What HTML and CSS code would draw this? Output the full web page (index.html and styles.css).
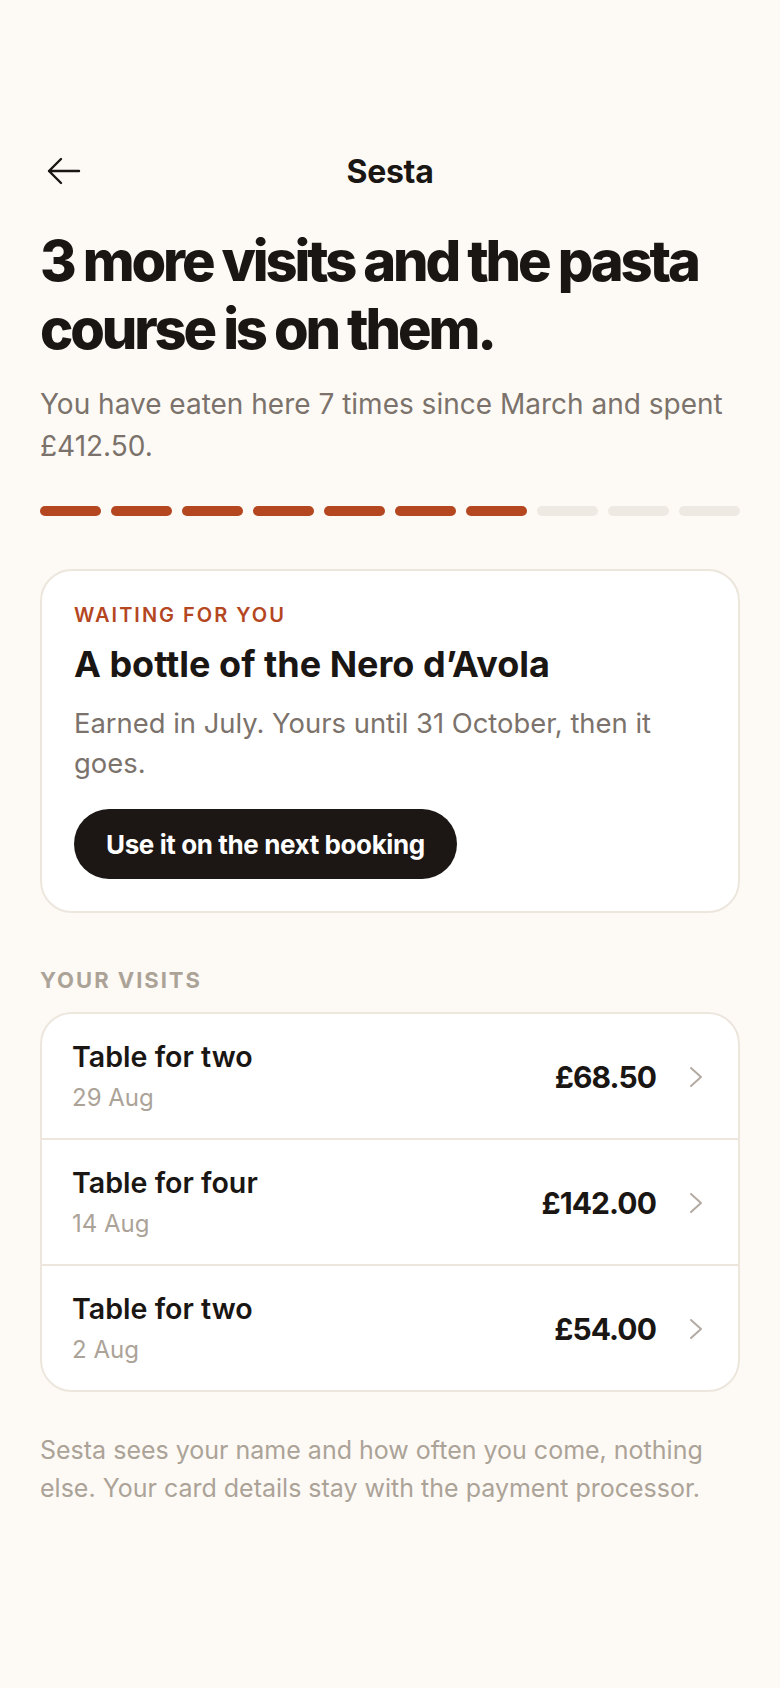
FILE: index.html
```
<!DOCTYPE html>
<html lang="en">
<head>
  <meta charset="UTF-8">
  <meta name="viewport" content="width=device-width, initial-scale=1.0">
  <title>Sesta – Your visits</title>
  <link rel="stylesheet" href="styles.css">
</head>
<body>
  <main class="page">
    <header class="topbar">
      <button class="back" aria-label="Back">
        <svg width="34" height="28" viewBox="0 0 34 28" fill="none" stroke="currentColor" stroke-width="2.4" stroke-linecap="round" stroke-linejoin="round">
          <path d="M32 14H2M14 2L2 14l12 12"/>
        </svg>
      </button>
      <div class="topbar-title">Sesta</div>
      <span></span>
    </header>

    <h1>3 more visits and the pasta course is on them.</h1>
    <p class="intro">You have eaten here 7 times since March and spent £412.50.</p>

    <!-- 7 of 10 visits -->
    <div class="progress">
      <span class="seg done"></span>
      <span class="seg done"></span>
      <span class="seg done"></span>
      <span class="seg done"></span>
      <span class="seg done"></span>
      <span class="seg done"></span>
      <span class="seg done"></span>
      <span class="seg"></span>
      <span class="seg"></span>
      <span class="seg"></span>
    </div>

    <!-- Reward card -->
    <section class="reward">
      <div class="eyebrow">Waiting for you</div>
      <h2>A bottle of the Nero d’Avola</h2>
      <p>Earned in July. Yours until 31 October, then it goes.</p>
      <button class="btn">Use it on the next booking</button>
    </section>

    <div class="section-label">Your visits</div>
    <ul class="visits">
      <li class="visit">
        <div class="visit-info">
          <div class="visit-name">Table for two</div>
          <div class="visit-date">29 Aug</div>
        </div>
        <div class="visit-price">£68.50</div>
        <svg class="chevron" width="20" height="24" viewBox="0 0 20 24" fill="none" stroke="currentColor" stroke-width="2" stroke-linecap="round" stroke-linejoin="round"><path d="M5 3l10 9-10 9"/></svg>
      </li>
      <li class="visit">
        <div class="visit-info">
          <div class="visit-name">Table for four</div>
          <div class="visit-date">14 Aug</div>
        </div>
        <div class="visit-price">£142.00</div>
        <svg class="chevron" width="20" height="24" viewBox="0 0 20 24" fill="none" stroke="currentColor" stroke-width="2" stroke-linecap="round" stroke-linejoin="round"><path d="M5 3l10 9-10 9"/></svg>
      </li>
      <li class="visit">
        <div class="visit-info">
          <div class="visit-name">Table for two</div>
          <div class="visit-date">2 Aug</div>
        </div>
        <div class="visit-price">£54.00</div>
        <svg class="chevron" width="20" height="24" viewBox="0 0 20 24" fill="none" stroke="currentColor" stroke-width="2" stroke-linecap="round" stroke-linejoin="round"><path d="M5 3l10 9-10 9"/></svg>
      </li>
    </ul>

    <p class="note">Sesta sees your name and how often you come, nothing else. Your card details stay with the payment processor.</p>
  </main>
</body>
</html>
```

FILE: styles.css
```
body {
  margin: 0;
  background-color: #fdfaf5;
  color: #1a1614;
  font-family: 'Inter', 'Noto Sans', sans-serif;
}
.page {
  padding: 147px 40px 80px;
}
/* Top bar */
.topbar {
  display: grid;
  grid-template-columns: 48px 1fr 48px;
  align-items: center;
  height: 48px;
}
.back {
  display: flex;
  align-items: center;
  width: 48px;
  height: 48px;
  padding: 0 0 0 7px;
  border: none;
  background: none;
  color: #1a1614;
  cursor: pointer;
}
.topbar-title {
  text-align: center;
  font-size: 32px;
  font-weight: 700;
  letter-spacing: -0.01em;
}
h1 {
  margin: 32px 0 0;
  font-size: 56px;
  font-weight: 800;
  line-height: 68px;
  letter-spacing: -0.056em;
}
.intro {
  margin: 20px 0 0;
  font-size: 28px;
  line-height: 42px;
  color: #7b726b;
}
/* Progress */
.progress {
  display: flex;
  gap: 10px;
  margin-top: 39px;
}
.seg {
  flex: 1;
  height: 10px;
  border-radius: 5px;
  background-color: #eee9e2;
}
.seg.done {
  background-color: #b4471f;
}
/* Reward card */
.reward {
  margin-top: 53px;
  padding: 32px;
  background: #fff;
  border: 2px solid #ece6dd;
  border-radius: 32px;
}
.eyebrow {
  font-size: 20px;
  font-weight: 600;
  line-height: 24px;
  letter-spacing: 0.1em;
  text-transform: uppercase;
  color: #b4471f;
}
.reward h2 {
  margin: 16px 0 0;
  font-size: 36px;
  font-weight: 700;
  line-height: 42px;
}
.reward p {
  margin: 18px 0 0;
  font-size: 27.4px;
  line-height: 40px;
  color: #7b726b;
}
.btn {
  display: inline-flex;
  align-items: center;
  height: 70px;
  margin-top: 26px;
  padding: 0 32px;
  border: none;
  border-radius: 35px;
  background-color: #1c1715;
  color: #fff;
  font-family: inherit;
  font-size: 26px;
  font-weight: 700;
  letter-spacing: -0.015em;
  cursor: pointer;
}
/* Visits */
.section-label {
  margin: 54px 0 19px;
  font-size: 22px;
  font-weight: 700;
  line-height: 26px;
  letter-spacing: 0.09em;
  text-transform: uppercase;
  color: #aca398;
}
.visits {
  list-style: none;
  margin: 0;
  padding: 0;
  background: #fff;
  border: 2px solid #ece6dd;
  border-radius: 32px;
  overflow: hidden;
}
.visit {
  display: flex;
  align-items: center;
  gap: 30px;
  padding: 25px 32px 24px 30px;
  border-bottom: 2px solid #ece6dd;
}
.visit:last-child {
  border-bottom: none;
}
.visit-info {
  flex: 1;
}
.visit-name {
  font-size: 28.6px;
  font-weight: 600;
  line-height: 36px;
}
.visit-date {
  margin-top: 7px;
  font-size: 24px;
  line-height: 32px;
  color: #aca398;
}
.visit-price {
  font-size: 30px;
  font-weight: 700;
  letter-spacing: -0.03em;
}
.chevron {
  color: #b3aba2;
  flex-shrink: 0;
}
.note {
  margin: 39px 0 0;
  font-size: 25px;
  line-height: 38px;
  color: #aca398;
}
```
